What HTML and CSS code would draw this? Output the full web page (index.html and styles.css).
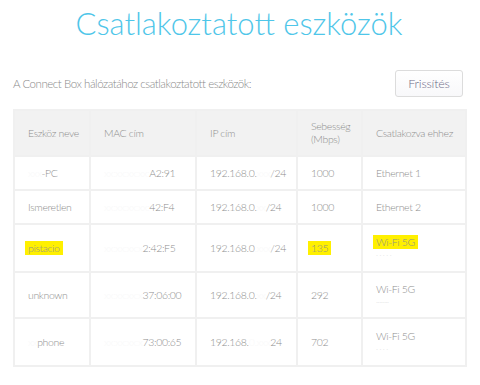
FILE: index.html
```html
<!DOCTYPE html>
<html lang="hu">
<head>
<meta charset="utf-8">
<link rel="stylesheet" href="styles.css">
</head>
<body>
<h1 class="title">Csatlakoztatott eszközök</h1>
<div class="bar">
  <p class="intro">A Connect Box hálózatához csatlakoztatott eszközök:</p>
  <button class="btn">Frissítés</button>
</div>
<table class="devices">
  <colgroup>
    <col class="c1"><col class="c2"><col class="c3"><col class="c4"><col class="c5">
  </colgroup>
  <thead>
    <tr>
      <th>Eszköz neve</th>
      <th>MAC cím</th>
      <th>IP cím</th>
      <th>Sebesség<br>(Mbps)</th>
      <th>Csatlakozva ehhez</th>
    </tr>
  </thead>
  <tbody>
    <tr class="short">
      <td><span class="blur">xxx</span>-PC</td>
      <td><span class="blur">xx:xx:xx:xx:</span>A2:91</td>
      <td>192.168.0.<span class="blur">xxx</span>/24</td>
      <td>1000</td>
      <td>Ethernet 1</td>
    </tr>
    <tr class="short">
      <td>Ismeretlen</td>
      <td><span class="blur">xx:xx:xx:xx:</span>42:F4</td>
      <td>192.168.0.<span class="blur">xx</span>/24</td>
      <td>1000</td>
      <td>Ethernet 2</td>
    </tr>
    <tr class="tall">
      <td><span class="hl">pistacio</span></td>
      <td><span class="blur">xx:xx:xx:x</span>2:42:F5</td>
      <td>192.168.0<span class="blur">.xxx</span>/24</td>
      <td><span class="hl">135</span></td>
      <td><span class="hl">Wi-Fi 5G</span><span class="sub">· · · · ·</span></td>
    </tr>
    <tr class="mid">
      <td>unknown</td>
      <td><span class="blur">xx:xx:xx:x</span>37:06:00</td>
      <td>192.168.0.<span class="blur">xx</span>/24</td>
      <td>292</td>
      <td>Wi-Fi 5G<span class="sub">········</span></td>
    </tr>
    <tr class="tall">
      <td><span class="blur">xx</span>phone</td>
      <td><span class="blur">xx:xx:xx:x</span>73:00:65</td>
      <td>192.168.<span class="blur">0.xxx</span>24</td>
      <td>702</td>
      <td>Wi-Fi 5G<span class="sub">·  · · ·</span></td>
    </tr>
  </tbody>
</table>
</body>
</html>
```
FILE: styles.css
```css
html, body {
  margin: 0;
  padding: 0;
  background: #fff;
}
body {
  padding: 0 15px 0 13px;
  font-family: Lato, "Open Sans", sans-serif;
  color: #8a8a8a;
}
.title {
  margin: 0;
  padding-top: 3px;
  text-align: center;
  font-weight: 300;
  font-size: 31px;
  line-height: 40px;
  color: #4fc6e9;
}
.bar {
  display: flex;
  align-items: center;
  justify-content: space-between;
  margin-top: 26px;
  height: 28px;
}
.intro {
  margin: 0;
  font-size: 11.5px;
  letter-spacing: -0.45px;
  font-weight: 300;
  color: #8a8a8a;
}
.btn {
  width: 68px;
  height: 27px;
  margin-right: 2px;
  border: 1px solid #dcdcdc;
  border-radius: 3px;
  background: linear-gradient(#fff, #f8f8fa);
  font-family: Lato, sans-serif;
  font-weight: 300;
  font-size: 12.5px;
  letter-spacing: -0.2px;
  color: #6c6a86;
  padding: 0;
}
.devices {
  margin-top: 12px;
  width: 452px;
  table-layout: fixed;
  border-collapse: collapse;
  font-size: 10.5px;
  letter-spacing: -0.35px;
  font-weight: 300;
  color: #8e8e8e;
}
.c1 { width: 76px; }
.c2 { width: 106px; }
.c3 { width: 101px; }
.c4 { width: 65px; }
.c5 { width: 104px; }
.devices th, .devices td {
  border: 2px solid #f0f0f0;
  padding: 0 0 0 13px;
  text-align: left;
  vertical-align: middle;
  font-weight: 300;
  white-space: nowrap;
  overflow: hidden;
}
.devices th {
  background: #f2f2f2;
  height: 44px;
  line-height: 13px;
}
.devices td { line-height: 13px; }
.devices tr.short td { height: 32px; }
.devices tr.tall td { height: 46px; }
.devices tr.mid td { height: 44px; }
.sub {
  display: block;
  font-size: 8px;
  line-height: 12px;
  color: #e2e2e2;
}
.blur { color: #f9f9f9; }
.hl {
  background: #fff000;
  padding: 1px 3px;
  margin-left: -3px;
}
```
